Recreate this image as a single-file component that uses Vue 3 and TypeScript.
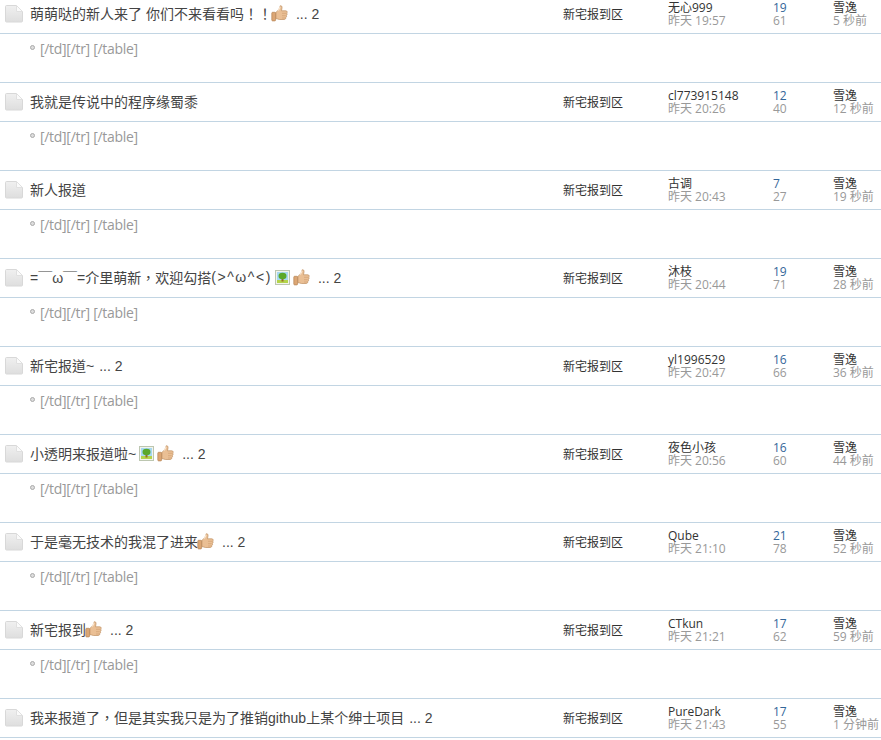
<script setup lang="ts">
interface Thread {
  title: string
  titleEnd?: string
  image?: boolean
  thumb?: boolean
  pages?: number
  author: string
  time: string
  replies: number
  views: number
  ago: string
}

const threads: Thread[] = [
  { title: "萌萌哒的新人来了 你们不来看看吗！！", thumb: true, pages: 2, author: "无心999", time: "昨天 19:57", replies: 19, views: 61, ago: "5 秒前" },
  { title: "我就是传说中的程序缘蜀黍", author: "cl773915148", time: "昨天 20:26", replies: 12, views: 40, ago: "12 秒前" },
  { title: "新人报道", author: "古调", time: "昨天 20:43", replies: 7, views: 27, ago: "19 秒前" },
  { title: "=￣ω￣=介里萌新，欢迎勾搭", titleEnd: "(>^ω^<)", image: true, thumb: true, pages: 2, author: "沐枝", time: "昨天 20:44", replies: 19, views: 71, ago: "28 秒前" },
  { title: "新宅报道~", pages: 2, author: "yl1996529", time: "昨天 20:47", replies: 16, views: 66, ago: "36 秒前" },
  { title: "小透明来报道啦~", image: true, thumb: true, pages: 2, author: "夜色小孩", time: "昨天 20:56", replies: 16, views: 60, ago: "44 秒前" },
  { title: "于是毫无技术的我混了进来", thumb: true, pages: 2, author: "Qube", time: "昨天 21:10", replies: 21, views: 78, ago: "52 秒前" },
  { title: "新宅报到", thumb: true, pages: 2, author: "CTkun", time: "昨天 21:21", replies: 17, views: 62, ago: "59 秒前" },
  { title: "我来报道了，但是其实我只是为了推销github上某个绅士项目", pages: 2, author: "PureDark", time: "昨天 21:43", replies: 17, views: 55, ago: "1 分钟前" },
]
</script>

<template>
  <div class="list">
    <div class="thread" v-for="t in threads" :key="t.author">
      <div class="row">
        <svg class="page" width="18" height="18" viewBox="0 0 18 18">
          <defs>
            <linearGradient id="sheet" x1="0" y1="0" x2="0" y2="1">
              <stop offset="0" stop-color="#f0f0f0" />
              <stop offset="1" stop-color="#dedede" />
            </linearGradient>
          </defs>
          <path d="M1.500 .5h10l6 6V16a1 1 0 0 1-1 1h-15a1 1 0 0 1-1-1V1.500a1 1 0 0 1 1-1z" fill="url(#sheet)" stroke="#d8d8d8" />
          <path d="M11.500 .5v6h6z" fill="#fafafa" stroke="#e0e0e0" />
        </svg>
        <div class="title">
          <span class="name">{{ t.title }}</span>
          <span v-if="t.titleEnd" class="name wide">{{ t.titleEnd }}</span>
          <svg v-if="t.image" class="pic" width="15" height="15" viewBox="0 0 15 15">
            <rect x="0.500" y="0.500" width="14" height="14" fill="#f2f4ec" stroke="#bcc6b0" />
            <rect x="2" y="2" width="11" height="11" fill="#a6d8f2" />
            <rect x="2" y="10" width="11" height="3" fill="#b4d44a" />
            <rect x="6.500" y="7.500" width="2" height="4" fill="#9a6a2a" />
            <ellipse cx="7.500" cy="6" rx="4" ry="3.200" fill="#5aa82a" />
          </svg>
          <svg v-if="t.thumb" class="thumb" :class="{ near: !t.image }" width="17" height="17" viewBox="0 0 17 17">
            <path d="M9.200 .8c1.300-.4 2 .7 1.800 2l-.5 3h4.300c1.500 0 1.800 1.700.8 2.300.8.700.6 1.900-.3 2.300.6.800.2 1.800-.6 2.100.3 1-.4 2-1.400 2H8.500c-1.500 0-2.300-1-3.700-1V7.400C7 6 8.800 3.800 9.200 .8z" fill="#eabf94" stroke="#bf8f60" stroke-width="0.700" />
            <rect x="0.800" y="7.300" width="3.800" height="8.600" rx="0.800" fill="#dca674" stroke="#b58454" stroke-width="0.700" />
            <path d="M7.200 5.500c1-1 1.600-2.300 2-3.800" fill="none" stroke="#fae6d0" stroke-width="1.200" />
            <path d="M11 8.300h4M11 10.700h3.600M11 13h3" fill="none" stroke="#cc9c6e" stroke-width="0.600" />
          </svg>
          <span v-if="t.pages" class="pages" :class="{ plain: !t.thumb }">... {{ t.pages }}</span>
        </div>
        <div class="forum">新宅报到区</div>
        <div class="cell">
          <div>{{ t.author }}</div>
          <div class="muted">{{ t.time }}</div>
        </div>
        <div class="cell">
          <div class="replies">{{ t.replies }}</div>
          <div class="muted">{{ t.views }}</div>
        </div>
        <div class="cell">
          <div>雪逸</div>
          <div class="muted">{{ t.ago }}</div>
        </div>
      </div>
      <div class="preview">
        <span class="dot"></span>
        <span class="quote">[/td][/tr] [/table]</span>
      </div>
    </div>
  </div>
</template>

<style scoped>
.list {
  margin-top: -6px;
  font-family: "Open Sans", "Noto Sans CJK SC", sans-serif;
  font-size: 12px;
  color: #444;
}

.thread {
  border-top: 1px solid #c2d5e3;
}

.row {
  display: grid;
  grid-template-columns: 30px 532px 106px 105px 60px 48px;
  align-items: center;
  height: 38px;
  border-bottom: 1px solid #c2d5e3;
}

.page {
  margin-left: 5px;
}

.title {
  display: flex;
  align-items: center;
  height: 36px;
  margin-bottom: 2px;
  font-family: "Liberation Sans", "Noto Sans CJK TC", sans-serif;
  font-size: 14px;
  white-space: nowrap;
}

.wide {
  letter-spacing: 1.55px;
}

.pic {
  margin-left: 3px;
}

.thumb {
  margin-left: 3px;
}

.thumb.near {
  margin-left: -1px;
}

.pages {
  margin-left: 8px;
  padding-top: 2px;
}

.pages.plain {
  margin-left: 5px;
}

.forum {
  padding-left: 1px;
  color: #333;
}

.cell {
  line-height: 13px;
  color: #333;
  white-space: nowrap;
}

.replies {
  color: #369;
}

.muted {
  color: #999;
}

.preview {
  display: flex;
  align-items: center;
  height: 48px;
  padding: 0 0 21px 30px;
  box-sizing: border-box;
  font-family: "Open Sans", sans-serif;
  font-size: 14px;
  letter-spacing: -0.3px;
  color: #999;
}

.quote {
  padding-top: 1px;
}

.dot {
  width: 3px;
  height: 3px;
  margin-right: 5px;
  border: 1px solid #aaa;
  border-radius: 50%;
  background: #ddd;
}
</style>

<style>
html,
body {
  overflow: hidden;
  background: #fff;
}
</style>
